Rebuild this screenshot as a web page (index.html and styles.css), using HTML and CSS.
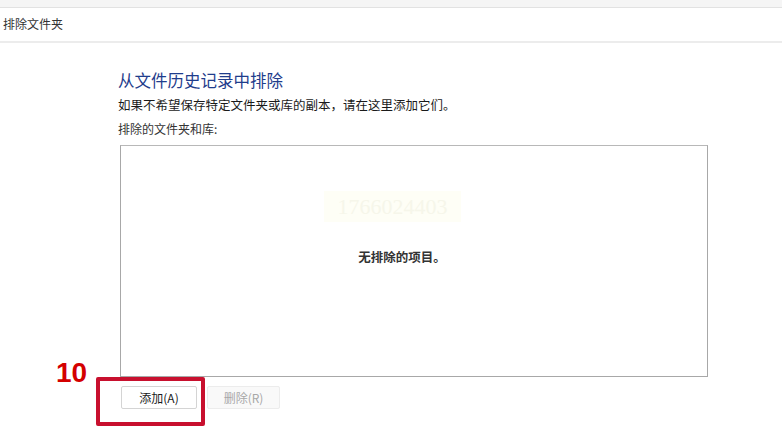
FILE: index.html
```html
<!DOCTYPE html>
<html lang="zh-CN">
<head>
  <meta charset="UTF-8">
  <meta name="viewport" content="width=device-width, initial-scale=1.0">
  <title>排除文件夹</title>
  <link rel="stylesheet" href="styles.css">
</head>
<body>
  <div class="top-strip"></div>
  <div class="title-bar">排除文件夹</div>

  <div class="content">
    <h1 class="page-title">从文件历史记录中排除</h1>
    <p class="page-desc">如果不希望保存特定文件夹或库的副本，请在这里添加它们。</p>
    <p class="list-label">排除的文件夹和库:</p>

    <div class="exclude-list">
      <div class="watermark">1766024403</div>
      <div class="empty-msg">无排除的项目。</div>
    </div>

    <div class="button-row">
      <button class="btn">添加(A)</button>
      <button class="btn" disabled>删除(R)</button>
    </div>

    <!-- step marker -->
    <div class="step-num">10</div>
    <div class="step-box"></div>
  </div>
</body>
</html>
```

FILE: styles.css
```css
body {
  margin: 0;
  background: #fff;
  font-family: "Noto Sans CJK SC", "Liberation Sans", sans-serif;
  color: #1a1a1a;
  height: 442px;
  overflow: hidden;
}
.top-strip {
  height: 7px;
  background: #f5f5f5;
  border-bottom: 1px solid #e2e2e2;
  margin-right: 1px;
}
.title-bar {
  height: 33px;
  line-height: 32px;
  padding-left: 3px;
  font-size: 12px;
  color: #333;
  border-bottom: 2px solid #ececec;
  margin-right: 1px;
}

.content {
  position: relative;
  padding: 26px 0 0 118px;
}
.page-title {
  margin: 0;
  font-size: 16.5px;
  font-weight: normal;
  line-height: 22px;
  color: #1f3d8c;
}
.page-desc {
  margin: 5px 0 0;
  font-size: 12.5px;
  line-height: 18px;
  color: #1a1a1a;
}
.list-label {
  margin: 6px 0 0;
  font-size: 12px;
  line-height: 18px;
  color: #333;
}

.exclude-list {
  position: relative;
  box-sizing: border-box;
  margin: 7px 0 0 2px;
  width: 588px;
  height: 232px;
  border: 1px solid #a8a8a8;
  border-top-color: #b8b8b8;
  display: flex;
  justify-content: center;
  align-items: center;
}
.watermark {
  position: absolute;
  left: 203px;
  top: 45px;
  width: 137px;
  height: 31px;
  background: #fefef6;
  color: #f6f6ea;
  font-family: "Liberation Serif", serif;
  font-size: 22px;
  line-height: 31px;
  text-align: center;
}
.empty-msg {
  margin: -10px 0 0 -24px;
  font-size: 12.5px;
  font-weight: bold;
  color: #333;
}

.button-row {
  display: flex;
  gap: 10px;
  margin: 9px 0 0 3px;
}
.btn {
  box-sizing: border-box;
  width: 76px;
  height: 23px;
  padding: 0;
  font-family: inherit;
  font-size: 12px;
  color: #1a1a1a;
  background: #fff;
  border: 1px solid #d4d4d4;
  border-radius: 2px;
}
.btn:disabled {
  width: 73px;
  color: #a8a8a8;
  background: #f9f9f9;
  border-color: #ececec;
}

.step-num {
  position: absolute;
  left: 56px;
  top: 316px;
  font-family: "Liberation Sans", sans-serif;
  font-size: 28px;
  font-weight: bold;
  color: #d40000;
  line-height: 28px;
}
.step-box {
  position: absolute;
  left: 96px;
  top: 334px;
  width: 109px;
  height: 49px;
  box-sizing: border-box;
  border: 4px solid #c8102e;
  border-radius: 2px;
}
```
